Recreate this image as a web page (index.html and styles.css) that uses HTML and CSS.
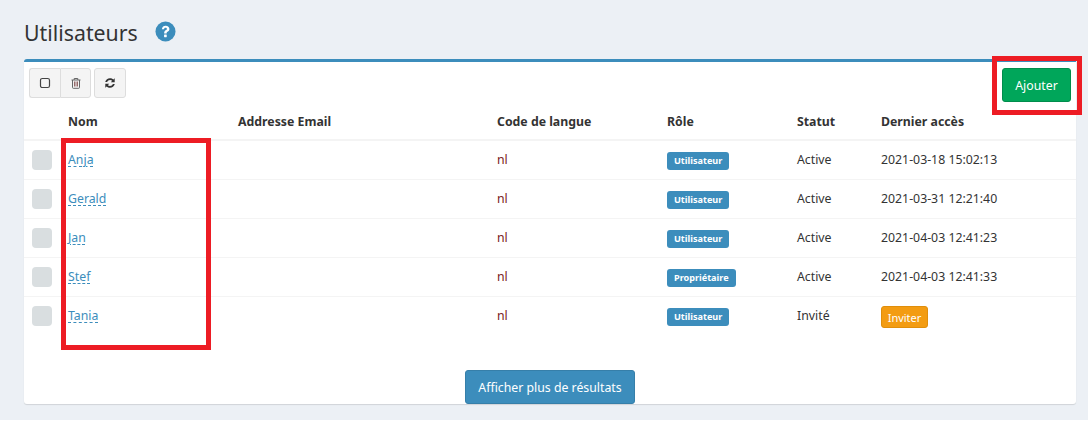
FILE: index.html
```html
<!DOCTYPE html>
<html lang="fr">
<head>
<meta charset="utf-8">
<title>Utilisateurs</title>
<link rel="stylesheet" href="styles.css">
</head>
<body>
<header class="page-head">
  <h1>Utilisateurs</h1>
  <svg class="help" viewBox="0 0 22 22" width="21" height="21"><circle cx="11" cy="11" r="10.5" fill="#3c8dbc"/><path d="M7.2 8.6C7.5 6.2 9 5 11.2 5c2.3 0 3.9 1.4 3.9 3.3 0 1.5-.8 2.3-1.9 3-.8.5-1 .8-1 1.7H9.6c0-1.700.4-2.500 1.500-3.200.9-.6 1.300-.9 1.300-1.500 0-.7-.5-1.100-1.300-1.100-.9 0-1.400.5-1.600 1.500z" fill="#fff"/><rect x="9.500" y="14.200" width="2.800" height="2.800" rx=".4" fill="#fff"/></svg>
</header>
<main class="box">
  <div class="toolbar">
    <div class="tools">
      <div class="btn-group">
        <button class="tool"><svg viewBox="0 0 12 12" width="12" height="12"><rect x="1.500" y="1.500" width="9" height="9" rx="1.800" fill="none" stroke="#444" stroke-width="1.200"/></svg></button>
        <button class="tool"><svg viewBox="0 0 12 12" width="12" height="12"><path d="M1.500 3h9M4.200 3V1.500h3.600V3M2.500 3v7.500a.8.8 0 0 0 .8.8h5.400a.8.8 0 0 0 .8-.8V3" fill="none" stroke="#666" stroke-width="1"/><path d="M4.500 4.500v5M6 4.500v5M7.500 4.500v5" stroke="#8a5a5a" stroke-width=".9"/></svg></button>
      </div>
      <button class="tool single"><svg viewBox="0 0 12 12" width="12" height="12"><path d="M1.200 5C1.800 2.800 3.700 1.300 6 1.300c1.300 0 2.500.5 3.400 1.300L10.700 1.300v3.900H6.800l1.400-1.400A3.200 3.200 0 0 0 6 3C4.700 3 3.600 3.800 3.100 5zM10.800 7C10.200 9.200 8.300 10.700 6 10.700c-1.300 0-2.500-.5-3.400-1.300L1.300 10.700V6.800h3.900L3.800 8.200A3.200 3.200 0 0 0 6 9c1.300 0 2.400-.8 2.900-2z" fill="#333"/></svg></button>
    </div>
    <button class="add">Ajouter</button>
  </div>
  <table class="users">
    <colgroup>
      <col class="c-check"><col class="c-name"><col class="c-mail"><col class="c-lang"><col class="c-role"><col class="c-status"><col>
    </colgroup>
    <thead>
      <tr><th></th><th>Nom</th><th>Addresse Email</th><th>Code de langue</th><th>Rôle</th><th>Statut</th><th>Dernier accès</th></tr>
    </thead>
    <tbody>
      <tr><td><span class="check"></span></td><td><a class="name">Anja</a></td><td></td><td class="lang">nl</td><td><span class="label">Utilisateur</span></td><td>Active</td><td>2021-03-18 15:02:13</td></tr>
      <tr><td><span class="check"></span></td><td><a class="name">Gerald</a></td><td></td><td class="lang">nl</td><td><span class="label">Utilisateur</span></td><td>Active</td><td>2021-03-31 12:21:40</td></tr>
      <tr><td><span class="check"></span></td><td><a class="name">Jan</a></td><td></td><td class="lang">nl</td><td><span class="label">Utilisateur</span></td><td>Active</td><td>2021-04-03 12:41:23</td></tr>
      <tr><td><span class="check"></span></td><td><a class="name">Stef</a></td><td></td><td class="lang">nl</td><td><span class="label">Propriétaire</span></td><td>Active</td><td>2021-04-03 12:41:33</td></tr>
      <tr><td><span class="check"></span></td><td><a class="name">Tania</a></td><td></td><td class="lang">nl</td><td><span class="label">Utilisateur</span></td><td>Invité</td><td><button class="invite">Inviter</button></td></tr>
    </tbody>
  </table>
  <div class="more"><button class="more-btn">Afficher plus de résultats</button></div>
</main>
<div class="mark mark-add"></div>
<div class="mark mark-names"></div>
</body>
</html>
```
FILE: styles.css
```css
* { box-sizing: border-box; }
html, body { height: 100%; }
body {
  margin: 0;
  background: #fff;
  font-family: "Noto Sans", sans-serif;
  font-size: 12.300px;
  color: #333;
  position: relative;
  overflow: hidden;
}
body::before {
  content: "";
  position: absolute;
  left: 0; right: 0; top: 0;
  height: 420px;
  background: #ecf0f5;
  z-index: -1;
}
.page-head {
  height: 59px;
  padding: 18px 0 0 24px;
  display: flex;
  align-items: flex-start;
  gap: 17px;
}
h1 {
  margin: 0;
  font-size: 21.300px;
  line-height: 29px;
  font-weight: 400;
}
.help { margin-top: 3px; }
.box {
  margin: 0 12px 0 24px;
  height: 345px;
  background: #fff;
  border-top: 3px solid #3c8dbc;
  border-radius: 3px;
  box-shadow: 0 1px 1px rgba(0,0,0,.12);
  display: flex;
  flex-direction: column;
}
.toolbar {
  display: flex;
  justify-content: space-between;
  align-items: flex-start;
  padding: 6px 5px 0 5px;
  height: 43px;
}
.tools { display: flex; gap: 3px; }
.btn-group { display: flex; }
.tool {
  width: 31px;
  height: 30px;
  padding: 0;
  background: #f4f4f4;
  border: 1px solid #ddd;
  border-radius: 3px;
  display: flex;
  align-items: center;
  justify-content: center;
}
.btn-group .tool:first-child { border-radius: 3px 0 0 3px; border-right: 0; }
.btn-group .tool:last-child { border-radius: 0 3px 3px 0; }
.single { width: 32px; }
.add {
  width: 69px;
  height: 34px;
  background: #00a65a;
  border: 1px solid #008d4c;
  border-radius: 3px;
  color: #fff;
  font: 12.300px "Noto Sans", sans-serif;
  padding: 0;
}
.users {
  width: 100%;
  border-collapse: collapse;
  table-layout: fixed;
}
.c-check { width: 36px; }
.c-name { width: 170px; }
.c-mail { width: 259px; }
.c-lang { width: 170px; }
.c-role { width: 130px; }
.c-status { width: 84px; }
th {
  text-align: left;
  font-weight: 700;
  height: 35px;
  padding: 0 8px 1px;
  border-bottom: 2px solid #f4f4f4;
}
td {
  height: 39px;
  padding: 0 8px;
  border-bottom: 1px solid #f4f4f4;
  vertical-align: middle;
}
td:first-child { padding: 1px 0 0 8px; }
tbody tr:last-child td { border-bottom: 0; }
.check {
  display: block;
  width: 20px;
  height: 20px;
  background: #d9dee0;
  border-radius: 4px;
}
.name {
  color: #3c8dbc;
  text-decoration: underline dashed 1px;
  text-underline-offset: 2px;
}
.lang { color: #7a2020; }
.label {
  display: inline-block;
  background: #3c8dbc;
  color: #fff;
  font-size: 9.100px;
  font-weight: 700;
  line-height: 18px;
  padding: 0 7px;
  border-radius: 3px;
  vertical-align: middle;
  margin-top: 3px;
}
.invite {
  width: 47px;
  height: 22px;
  padding: 0;
  background: #f39c12;
  border: 1px solid #e08e0b;
  border-radius: 3px;
  color: #fff;
  font: 11px "Noto Sans", sans-serif;
  margin-top: 3px;
}
.more {
  margin-top: auto;
  display: flex;
  justify-content: center;
}
.more-btn {
  width: 170px;
  height: 34px;
  padding: 0;
  background: #3c8dbc;
  border: 1px solid #367fa9;
  border-radius: 3px;
  color: #fff;
  font: 12.300px "Noto Sans", sans-serif;
}
.mark {
  position: absolute;
  border: 5px solid #ed1c24;
}
.mark-add { left: 992px; top: 56px; width: 90px; height: 59px; }
.mark-names { left: 61px; top: 138px; width: 150px; height: 212px; }
```
